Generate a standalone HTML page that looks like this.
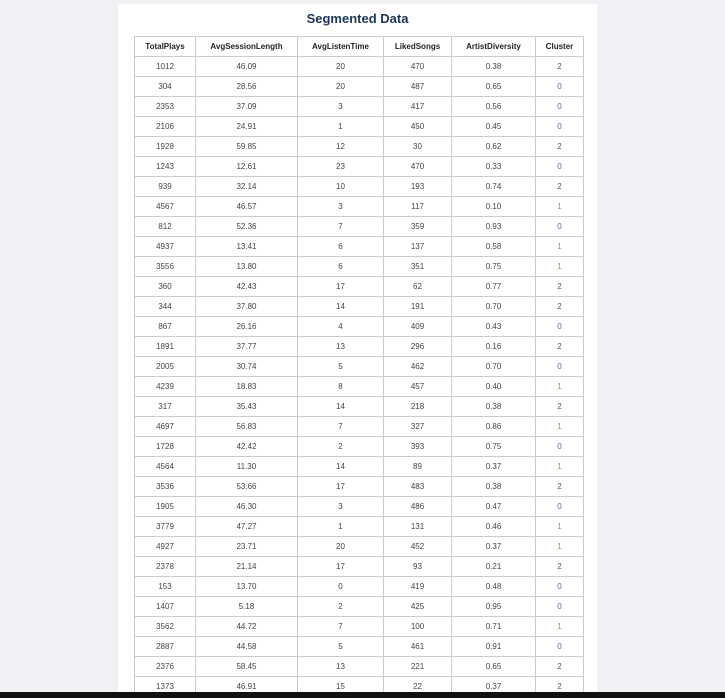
<!DOCTYPE html>
<html><head><style>
html,body{margin:0;padding:0}
body{width:725px;height:698px;background:#f0f1f5;position:relative;overflow:hidden;font-family:"Liberation Sans",sans-serif}
.card{position:absolute;left:118px;top:4px;width:479px;height:688px;background:#fff;overflow:hidden}
h1{margin:0;position:absolute;top:7px;width:100%;text-align:center;font-size:13px;font-weight:bold;color:#1c3557}
table{position:absolute;left:16px;top:32px;border-collapse:collapse;font-size:8px;color:#444}
td,th{border:1px solid #ccc;height:19px;text-align:center;padding:0}
th{font-weight:bold;color:#222;height:19px}
.c0{color:#4a6a95}.c1{color:#d98a1e}.c2{color:#556}
.bar{position:absolute;left:0;top:692px;width:725px;height:6px;background:#111}
</style></head><body>
<div class="card"><h1>Segmented Data</h1>
<table>
<colgroup><col style="width:61px"><col style="width:102px"><col style="width:86px"><col style="width:68px"><col style="width:84px"><col style="width:48px"></colgroup>
<tr><th>TotalPlays</th><th>AvgSessionLength</th><th>AvgListenTime</th><th>LikedSongs</th><th>ArtistDiversity</th><th>Cluster</th></tr>
<tr><td>1012</td><td>46.09</td><td>20</td><td>470</td><td>0.38</td><td class="c2">2</td></tr>
<tr><td>304</td><td>28.56</td><td>20</td><td>487</td><td>0.65</td><td class="c0">0</td></tr>
<tr><td>2353</td><td>37.09</td><td>3</td><td>417</td><td>0.56</td><td class="c0">0</td></tr>
<tr><td>2106</td><td>24.91</td><td>1</td><td>450</td><td>0.45</td><td class="c0">0</td></tr>
<tr><td>1928</td><td>59.85</td><td>12</td><td>30</td><td>0.62</td><td class="c2">2</td></tr>
<tr><td>1243</td><td>12.61</td><td>23</td><td>470</td><td>0.33</td><td class="c0">0</td></tr>
<tr><td>939</td><td>32.14</td><td>10</td><td>193</td><td>0.74</td><td class="c2">2</td></tr>
<tr><td>4567</td><td>46.57</td><td>3</td><td>117</td><td>0.10</td><td class="c1">1</td></tr>
<tr><td>812</td><td>52.36</td><td>7</td><td>359</td><td>0.93</td><td class="c0">0</td></tr>
<tr><td>4937</td><td>13.41</td><td>6</td><td>137</td><td>0.58</td><td class="c1">1</td></tr>
<tr><td>3556</td><td>13.80</td><td>6</td><td>351</td><td>0.75</td><td class="c1">1</td></tr>
<tr><td>360</td><td>42.43</td><td>17</td><td>62</td><td>0.77</td><td class="c2">2</td></tr>
<tr><td>344</td><td>37.80</td><td>14</td><td>191</td><td>0.70</td><td class="c2">2</td></tr>
<tr><td>867</td><td>26.16</td><td>4</td><td>409</td><td>0.43</td><td class="c0">0</td></tr>
<tr><td>1891</td><td>37.77</td><td>13</td><td>296</td><td>0.16</td><td class="c2">2</td></tr>
<tr><td>2005</td><td>30.74</td><td>5</td><td>462</td><td>0.70</td><td class="c0">0</td></tr>
<tr><td>4239</td><td>18.83</td><td>8</td><td>457</td><td>0.40</td><td class="c1">1</td></tr>
<tr><td>317</td><td>35.43</td><td>14</td><td>218</td><td>0.38</td><td class="c2">2</td></tr>
<tr><td>4697</td><td>56.83</td><td>7</td><td>327</td><td>0.86</td><td class="c1">1</td></tr>
<tr><td>1728</td><td>42.42</td><td>2</td><td>393</td><td>0.75</td><td class="c0">0</td></tr>
<tr><td>4564</td><td>11.30</td><td>14</td><td>89</td><td>0.37</td><td class="c1">1</td></tr>
<tr><td>3536</td><td>53.66</td><td>17</td><td>483</td><td>0.38</td><td class="c2">2</td></tr>
<tr><td>1905</td><td>46.30</td><td>3</td><td>486</td><td>0.47</td><td class="c0">0</td></tr>
<tr><td>3779</td><td>47.27</td><td>1</td><td>131</td><td>0.46</td><td class="c1">1</td></tr>
<tr><td>4927</td><td>23.71</td><td>20</td><td>452</td><td>0.37</td><td class="c1">1</td></tr>
<tr><td>2378</td><td>21.14</td><td>17</td><td>93</td><td>0.21</td><td class="c2">2</td></tr>
<tr><td>153</td><td>13.70</td><td>0</td><td>419</td><td>0.48</td><td class="c0">0</td></tr>
<tr><td>1407</td><td>5.18</td><td>2</td><td>425</td><td>0.95</td><td class="c0">0</td></tr>
<tr><td>3562</td><td>44.72</td><td>7</td><td>100</td><td>0.71</td><td class="c1">1</td></tr>
<tr><td>2887</td><td>44.58</td><td>5</td><td>461</td><td>0.91</td><td class="c0">0</td></tr>
<tr><td>2376</td><td>58.45</td><td>13</td><td>221</td><td>0.65</td><td class="c2">2</td></tr>
<tr><td>1373</td><td>46.91</td><td>15</td><td>22</td><td>0.37</td><td class="c2">2</td></tr>
</table></div>
<div class="bar"></div>
</body></html>
